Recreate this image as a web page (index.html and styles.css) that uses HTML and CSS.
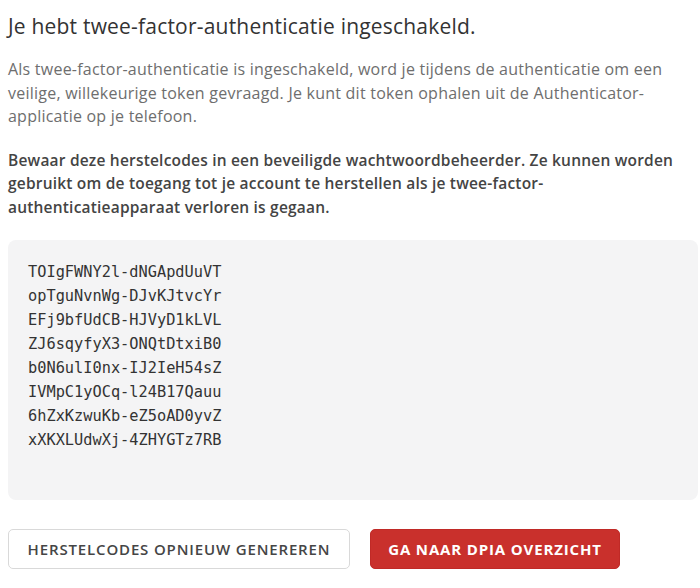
FILE: index.html
```html
<!DOCTYPE html>
<html lang="nl">
<head>
<meta charset="utf-8">
<title>Twee-factor-authenticatie</title>
<link rel="stylesheet" href="styles.css">
</head>
<body>
<main class="page">
  <h1 class="title">Je hebt twee-factor-authenticatie ingeschakeld.</h1>
  <p class="intro">Als twee-factor-authenticatie is ingeschakeld, word je tijdens de authenticatie om een veilige, willekeurige token gevraagd. Je kunt dit token ophalen uit de Authenticator-applicatie op je telefoon.</p>
  <p class="notice">Bewaar deze herstelcodes in een beveiligde wachtwoordbeheerder. Ze kunnen worden gebruikt om de toegang tot je account te herstellen als je twee-factor-authenticatieapparaat verloren is gegaan.</p>
  <div class="codes">
    <div class="code">TOIgFWNY2l-dNGApdUuVT</div>
    <div class="code">opTguNvnWg-DJvKJtvcYr</div>
    <div class="code">EFj9bfUdCB-HJVyD1kLVL</div>
    <div class="code">ZJ6sqyfyX3-ONQtDtxiB0</div>
    <div class="code">b0N6ulI0nx-IJ2IeH54sZ</div>
    <div class="code">IVMpC1yOCq-l24B17Qauu</div>
    <div class="code">6hZxKzwuKb-eZ5oAD0yvZ</div>
    <div class="code">xXKXLUdwXj-4ZHYGTz7RB</div>
  </div>
  <div class="actions">
    <button class="btn btn-secondary" type="button">Herstelcodes opnieuw genereren</button>
    <button class="btn btn-primary" type="button">Ga naar DPIA overzicht</button>
  </div>
</main>
</body>
</html>
```
FILE: styles.css
```css
html, body {
  margin: 0;
  padding: 0;
  background: #ffffff;
}

body {
  font-family: "Open Sans", "Noto Sans", sans-serif;
}

.page {
  padding: 12px 2px 0 8px;
  display: flex;
  flex-direction: column;
}

.title {
  margin: 0;
  font-size: 21px;
  line-height: 28px;
  font-weight: 400;
  letter-spacing: 0.2px;
  color: #333333;
}

.intro {
  margin: 18px 0 0;
  font-size: 16px;
  line-height: 23.5px;
  letter-spacing: 0.23px;
  color: #6e6e6e;
  padding-right: 4px;
}

.notice {
  margin: 20px 0 0;
  font-size: 15.5px;
  line-height: 23.5px;
  font-weight: 600;
  letter-spacing: 0.2px;
  color: #444444;
}

.codes {
  margin-top: 21px;
  background: #f4f4f5;
  border-radius: 8px;
  padding: 20px 20px 48px;
  display: flex;
  flex-direction: column;
}

.code {
  font-family: "DejaVu Sans Mono", "Liberation Mono", monospace;
  font-size: 15.3px;
  line-height: 24px;
  color: #333333;
}

.actions {
  margin-top: 29px;
  display: flex;
  gap: 20px;
}

.btn {
  height: 40px;
  border-radius: 5px;
  font-family: "Open Sans", "Noto Sans", sans-serif;
  font-size: 15px;
  text-transform: uppercase;
  letter-spacing: 0.85px;
  cursor: pointer;
  padding: 0;
}

.btn-secondary {
  width: 342px;
  background: #ffffff;
  border: 1px solid #d9d9d9;
  color: #454545;
  font-weight: 600;
}

.btn-primary {
  width: 250px;
  background: #c9302c;
  border: 1px solid #c02a27;
  color: #ffffff;
  font-weight: 700;
}
```
